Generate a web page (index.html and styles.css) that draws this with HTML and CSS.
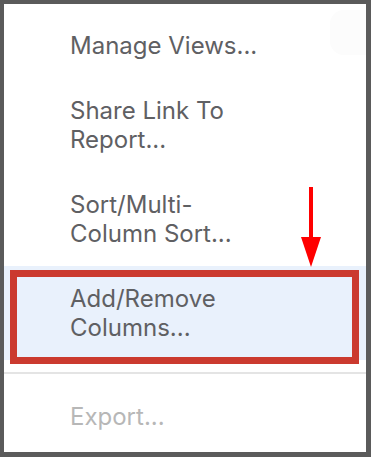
FILE: index.html
```html
<!DOCTYPE html>
<html lang="en">
<head>
    <meta charset="UTF-8">
    <meta name="viewport" content="width=device-width, initial-scale=1.0">
    <title>Report Menu</title>
    <link rel="stylesheet" href="styles.css">
</head>
<body>
    <div class="menu">
        <!-- Opciones del menú -->
        <div class="menu-item">Manage Views...</div>
        <div class="menu-item">Share Link To<br>Report...</div>
        <div class="menu-item">Sort/Multi-<br>Column Sort...</div>
        <div class="menu-item active">Add/Remove<br>Columns...</div>
        <div class="divider"></div>
        <div class="menu-item disabled">Export...</div>

        <!-- Flecha roja de anotación -->
        <div class="arrow"></div>
        <div class="ghost"></div>
    </div>
</body>
</html>
```

FILE: styles.css
```css
body {
    margin: 0;
    padding: 0;
    background-color: #ffffff;
    font-family: Inter, "Open Sans", sans-serif;
}

.menu {
    position: relative;
    width: 371px;
    height: 457px;
    box-sizing: border-box;
    border: 4px solid #5b5b5b;
    border-right-width: 5px;
    border-bottom-width: 5px;
    background-color: #ffffff;
    padding-top: 9px;
    overflow: hidden;
}

.menu-item {
    position: relative;
    padding: 18px 0 18px 66px;
    font-size: 24px;
    line-height: 29px;
    color: #5f6063;
}

.active {
    background-color: #e9f1fc;
}

/* Recuadro rojo de anotación */
.active::after {
    content: "";
    position: absolute;
    top: 4px;
    left: 6px;
    right: 7px;
    bottom: -4px;
    border: 7px solid #cb3a2f;
}

.disabled {
    color: #b7b7b7;
}

.divider {
    height: 2px;
    margin: 12px 0 10px 0;
    background-color: #e4e4e4;
}

.arrow {
    position: absolute;
    left: 297px;
    top: 183px;
    width: 21px;
    height: 80px;
}

.arrow::before {
    content: "";
    position: absolute;
    left: 8px;
    top: 0;
    width: 4px;
    height: 52px;
    background-color: #ff0000;
}

.arrow::after {
    content: "";
    position: absolute;
    left: 0;
    top: 50px;
    border-left: 10.5px solid transparent;
    border-right: 10.5px solid transparent;
    border-top: 30px solid #ff0000;
}

.ghost {
    position: absolute;
    right: -20px;
    top: 6px;
    width: 56px;
    height: 45px;
    border-radius: 14px;
    background-color: #fcfcfc;
}
```
